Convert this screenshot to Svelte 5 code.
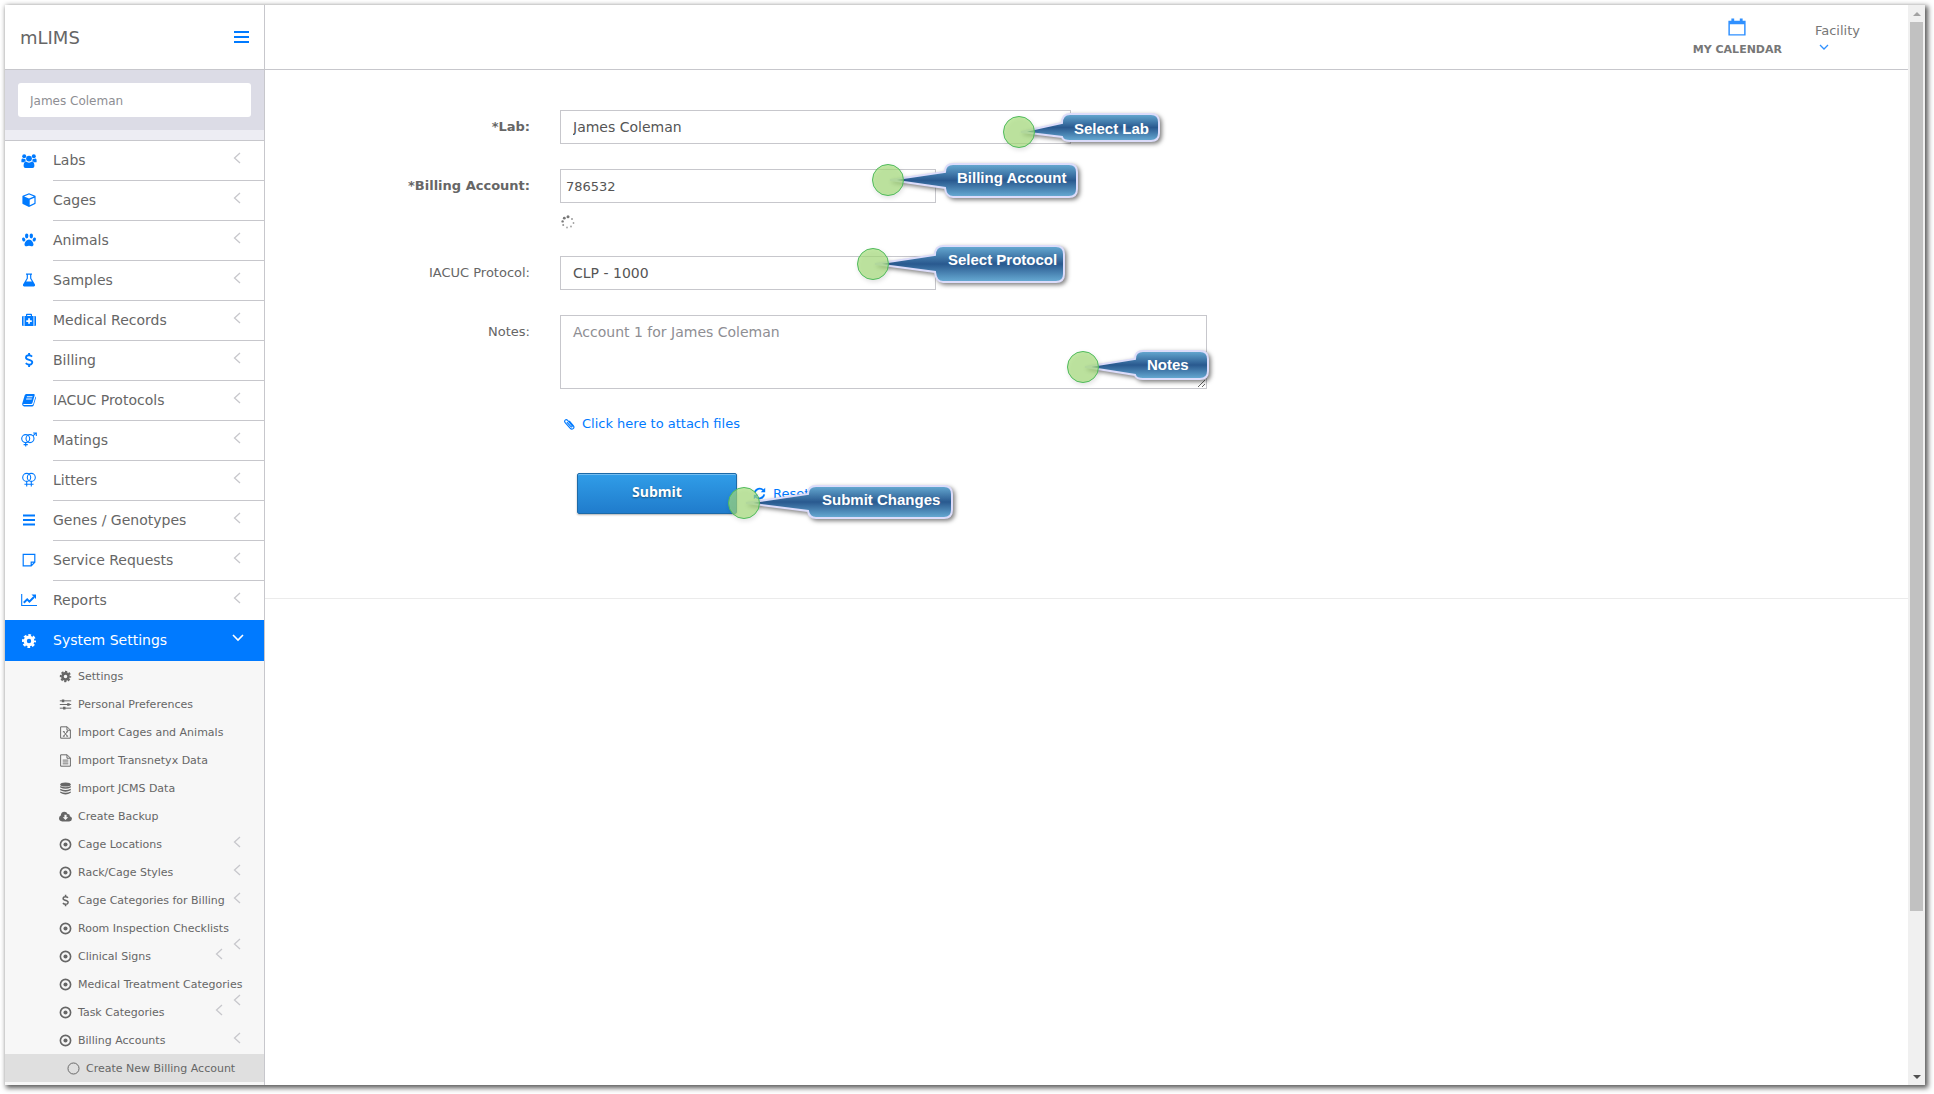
<script lang="ts">
    type SubItem = { label: string; icon: string; arrow?: "plain" | "dropped" | "inset" };

    const navItems = [
        { label: "Labs", icon: "users" },
        { label: "Cages", icon: "cube" },
        { label: "Animals", icon: "paw" },
        { label: "Samples", icon: "flask" },
        { label: "Medical Records", icon: "medkit" },
        { label: "Billing", icon: "dollar" },
        { label: "IACUC Protocols", icon: "book" },
        { label: "Matings", icon: "mating" },
        { label: "Litters", icon: "litter" },
        { label: "Genes / Genotypes", icon: "bars" },
        { label: "Service Requests", icon: "note" },
        { label: "Reports", icon: "chart" },
    ];

    const subItems: SubItem[] = [
        { label: "Settings", icon: "gear" },
        { label: "Personal Preferences", icon: "sliders" },
        { label: "Import Cages and Animals", icon: "excel" },
        { label: "Import Transnetyx Data", icon: "file" },
        { label: "Import JCMS Data", icon: "database" },
        { label: "Create Backup", icon: "cloud" },
        { label: "Cage Locations", icon: "target", arrow: "plain" },
        { label: "Rack/Cage Styles", icon: "target", arrow: "plain" },
        { label: "Cage Categories for Billing", icon: "dollar", arrow: "plain" },
        { label: "Room Inspection Checklists", icon: "target", arrow: "dropped" },
        { label: "Clinical Signs", icon: "target", arrow: "inset" },
        { label: "Medical Treatment Categories", icon: "target", arrow: "dropped" },
        { label: "Task Categories", icon: "target", arrow: "inset" },
        { label: "Billing Accounts", icon: "target", arrow: "plain" },
    ];

    // Annotation balloons: tip of the pointer, then the box, in main area pixels.
    const callouts = [
        { text: "Select Lab", cx: 754, cy: 62, x: 797, y: 44, w: 97, h: 27, tx: 809, ty: 64 },
        { text: "Billing Account", cx: 623, cy: 110, x: 680, y: 94, w: 132, h: 33, tx: 692, ty: 113 },
        { text: "Select Protocol", cx: 608, cy: 194, x: 670, y: 176, w: 129, h: 36, tx: 683, ty: 195 },
        { text: "Notes", cx: 818, cy: 297, x: 870, y: 281, w: 73, h: 28, tx: 882, ty: 300 },
        { text: "Submit Changes", cx: 479, cy: 433, x: 543, y: 416, w: 144, h: 32, tx: 557, ty: 435 },
    ];

    // The pointer joins the box between the two left corners, which stay round.
    function balloon(c) {
        const r = 8;
        const right = c.x + c.w;
        const bottom = c.y + c.h;
        const upper = Math.max(c.cy - 9, c.y + r);
        const lower = Math.min(c.cy + 8, bottom - r + 4);
        return (
            `M${c.x + r} ${c.y}H${right - r}Q${right} ${c.y} ${right} ${c.y + r}` +
            `V${bottom - r}Q${right} ${bottom} ${right - r} ${bottom}` +
            `H${c.x + r}Q${c.x + 1} ${bottom} ${c.x} ${lower}` +
            `L${c.cx + 2} ${c.cy}L${c.x} ${upper}` +
            `Q${c.x} ${c.y} ${c.x + r} ${c.y}Z`
        );
    }

    let lab = "James Coleman";
    let account = "786532";
    let protocol = "CLP - 1000";
    let notes = "Account 1 for James Coleman";
    let search = "James Coleman";
</script>

{#snippet icon(name: string)}
    <svg class="icon" viewBox="0 0 16 16" aria-hidden="true">
        {#if name === "users"}
            <g fill="currentColor">
                <circle cx="3.2" cy="3.2" r="2" />
                <circle cx="12.8" cy="3.2" r="2" />
                <path d="M.4 9V7.2Q.4 5.4 1.6 5.6Q3 6.4 4.4 5.9Q4.3 7.5 5 8.2Q3.6 8.4 3 9.3H1.2Q.5 9.4.4 9ZM15.600 9V7.200Q15.600 5.400 14.400 5.600Q13 6.400 11.600 5.900Q11.700 7.500 11 8.200Q12.400 8.400 13 9.300H14.800Q15.500 9.400 15.600 9Z" />
                <circle cx="8" cy="5.600" r="2.900" />
                <path d="M4.900 8.600Q8 10.800 11.100 8.600Q13.400 9.100 13.400 13Q13.400 15 11.500 15H4.500Q2.600 15 2.600 13Q2.600 9.100 4.900 8.600Z" />
            </g>
        {:else if name === "cube"}
            <path fill="currentColor" fill-rule="evenodd" d="M8 1.300L14.300 3.800Q14.600 4 14.600 4.400V11.300Q14.600 11.700 14.200 12L8 14.900L1.800 12Q1.400 11.700 1.400 11.300V4.400Q1.400 4 1.700 3.800ZM8 2.600L3.100 4.500L8 6.500L12.900 4.500ZM13.400 5.700L8.700 7.700V13.200L13.400 11Z" />
        {:else if name === "paw"}
            <g fill="currentColor">
                <ellipse cx="5.700" cy="4" rx="1.700" ry="2.400" />
                <ellipse cx="10.300" cy="4" rx="1.700" ry="2.400" />
                <ellipse cx="2.700" cy="7.500" rx="1.600" ry="2.100" transform="rotate(-20 2.700 7.500)" />
                <ellipse cx="13.300" cy="7.500" rx="1.600" ry="2.100" transform="rotate(20 13.300 7.500)" />
                <path d="M8 7.500C10.300 7.500 12.500 10.500 12.500 12.500C12.500 14 11.400 14.400 10.300 14.200Q8 13.300 5.700 14.200C4.600 14.400 3.500 14 3.500 12.500C3.500 10.500 5.700 7.500 8 7.500Z" />
            </g>
        {:else if name === "flask"}
            <path fill="currentColor" fill-rule="evenodd" d="M5 1.500H11V2.700H10.300V6.200L14 12.600Q14.500 14.300 13 14.500H3Q1.500 14.300 2 12.600L5.700 6.200V2.700H5ZM6.900 2.700V6.500L5.100 9.500H10.900L9.100 6.500V2.700Z" />
        {:else if name === "medkit"}
            <path fill="currentColor" fill-rule="evenodd" d="M1 5Q1 4 2 4H2.600V14H2Q1 14 1 13ZM13.400 4H14Q15 4 15 5V13Q15 14 14 14H13.400ZM3.500 4H5V2.500Q5 1.700 5.800 1.700H10.200Q11 1.700 11 2.500V4H12.500V14H3.500ZM6.200 2.900V4H9.800V2.900ZM7.200 6.300V8.200H5.300V9.900H7.200V11.800H8.900V9.900H10.800V8.200H8.900V6.300Z" />
        {:else if name === "dollar"}
            <path fill="none" stroke="currentColor" stroke-width="1.900" d="M8.100 1V3.300M8.100 12.700V15M11.100 4.600Q9.700 3.200 7.900 3.300C4.300 3.400 4.300 6.700 6.700 7.400L9.500 8.300C12.300 9.300 11.600 12.700 8.200 12.700Q6.200 12.700 4.800 11.200" />
        {:else if name === "book"}
            <path fill="currentColor" fill-rule="evenodd" d="M5.200 2H13Q14 2.200 13.700 3.300L11.400 11Q11.100 12 10 12H3Q2 12.200 2.300 13H11Q12 13 12.300 12L14.500 4.600Q15.200 5 14.900 6L12.700 13.200Q12.300 14.400 11 14.400H3Q1 14 1.100 12L3.700 3.300Q4 2.200 5.200 2ZM6 4.300L5.700 5.200H11.300L11.600 4.300ZM5.300 6.500L5 7.400H10.600L10.900 6.500Z" />
        {:else if name === "mating"}
            <g fill="none" stroke="currentColor" stroke-width="1.100">
                <circle cx="4.700" cy="6.600" r="4" />
                <circle cx="9" cy="6.600" r="4" />
                <path d="M4.700 10.600V14.500M2.600 12.600H6.800M11.900 3.800L14.900 1.100M12.200 1H15.300V4" />
            </g>
        {:else if name === "litter"}
            <g fill="none" stroke="currentColor" stroke-width="1.100">
                <circle cx="5.700" cy="5.400" r="4" />
                <circle cx="10.300" cy="5.400" r="4" />
                <path d="M5.700 9.400V14.500M10.300 9.400V14.500M3.400 12.200H12.600" />
            </g>
        {:else if name === "bars"}
            <path fill="currentColor" d="M2 2.500H14V4.500H2ZM2 7H14V9H2ZM2 11.500H14V13.500H2Z" />
        {:else if name === "note"}
            <path fill="none" stroke="currentColor" stroke-width="1.200" d="M2.200 2.300H13.800V10.200L10.200 13.800H2.200ZM13.800 10.200H10.200V13.800" />
        {:else if name === "chart"}
            <path fill="none" stroke="currentColor" stroke-width="1.100" d="M.7 2V13.500H16" />
            <path fill="none" stroke="currentColor" stroke-width="2" d="M2.800 10.800L6.200 7.400L8.400 9.600L13 5" />
            <path fill="currentColor" d="M10.500 2.500H15V7Z" />
        {:else if name === "gear"}
            <circle cx="8" cy="8" r="3.800" fill="none" stroke="currentColor" stroke-width="3.200" />
            <circle cx="8" cy="8" r="5.900" fill="none" stroke="currentColor" stroke-width="2.200" stroke-dasharray="2.700 1.934" stroke-dashoffset="1.350" />
        {:else if name === "sliders"}
            <path fill="none" stroke="currentColor" stroke-width="1.200" d="M1 3.500H15M1 8H15M1 12.500H15" />
            <path fill="currentColor" d="M3.500 1.900H6.500V5.100H3.500ZM10 6.400H13V9.600H10ZM5 10.900H8V14.100H5Z" />
        {:else if name === "excel" || name === "file"}
            <path fill="none" stroke="currentColor" stroke-width="1.200" d="M2 1H10L14 5V15H2ZM9.800 1V5.200H14" />
            {#if name === "excel"}
                <path fill="none" stroke="currentColor" stroke-width="1.200" d="M5.700 7L10.300 12.500M10.300 7L5.700 12.500M4.800 7H7M9 7H11.200M4.800 12.500H7M9 12.500H11.200" />
            {:else}
                <path fill="none" stroke="currentColor" stroke-width="1.100" d="M4.500 7.500H11.500M4.500 9.800H11.500M4.500 12.100H11.500" />
            {/if}
        {:else if name === "database"}
            <g fill="currentColor">
                <ellipse cx="8" cy="3" rx="6.500" ry="2.500" />
                <path d="M1.500 4.800Q8 8 14.500 4.800V6.700Q8 10.200 1.500 6.700ZM1.500 8.200Q8 11.500 14.500 8.200V10.200Q8 13.500 1.500 10.200ZM1.500 11.700Q8 15 14.500 11.700V13.300Q8 17.500 1.500 13.300Z" />
            </g>
        {:else if name === "cloud"}
            <path fill="currentColor" fill-rule="evenodd" d="M4 14Q0 13.800 0 10.200Q.1 7.800 2.200 6.800Q2.400 2.300 6.600 2.200Q9.500 2.300 10.600 4.900Q13.500 4.600 13.400 7.600Q16 8.300 16 10.700Q15.800 13.800 12.500 14ZM6.700 5.800V8.800H4.600L8 12.300L11.400 8.800H9.300V5.800Z" />
        {:else if name === "target"}
            <circle cx="8" cy="8" r="6.300" fill="none" stroke="currentColor" stroke-width="2" />
            <circle cx="8" cy="8" r="2.500" fill="currentColor" />
        {:else if name === "circle"}
            <circle cx="8" cy="8" r="6.800" fill="none" stroke="currentColor" stroke-width="1.200" />
        {:else if name === "calendar"}
            <path fill="none" stroke="currentColor" stroke-width="1.300" d="M1 3H15V15H1Z" />
            <path fill="currentColor" d="M1 3H15V5.500H1ZM3 .5H5.500V4H3ZM10.500 .5H13V4H10.500Z" />
        {:else if name === "clip"}
            <path fill="none" stroke="currentColor" stroke-width="1.500" d="M5.200 5.600L10.200 11.300C11.400 12.600 12.900 11.300 11.900 10L6.200 3.300C4 .9.800 3.300 2.900 6.200L9.400 13.600C12.300 16.600 16.200 13.400 13.700 10.100L8.300 3.700" />
        {:else if name === "refresh"}
            <path fill="none" stroke="currentColor" stroke-width="2.300" d="M2.200 7A6 6 0 0 1 12.600 4M13.800 9A6 6 0 0 1 3.400 12" />
            <path fill="currentColor" d="M15 1V6.500H9.500ZM1 15V9.500H6.500Z" />
        {/if}
    </svg>
{/snippet}

{#snippet arrow(kind: string)}
    <svg class="arrow {kind}" viewBox="0 0 8 12" aria-hidden="true">
        <path d="M7 1L1.500 6L7 11" />
    </svg>
{/snippet}

<div class="window">
    <aside>
        <div class="brand">
            <span>mLIMS</span>
            <button class="toggle" aria-label="Toggle menu">
                <svg viewBox="0 0 15 12"><path d="M0 0H15V2H0ZM0 5H15V7H0ZM0 10H15V12H0Z" /></svg>
            </button>
        </div>
        <div class="search">
            <input type="text" aria-label="Search" bind:value={search} />
        </div>
        <nav>
            {#each navItems as item}
                <a class="item" href="#top">
                    {@render icon(item.icon)}
                    <span class="text">{item.label}{@render arrow("plain")}</span>
                </a>
            {/each}
            <a class="item active" href="#top">
                {@render icon("gear")}
                <span class="text">
                    System Settings
                    <svg class="down" viewBox="0 0 12 8" aria-hidden="true"><path d="M1 1L6 6L11 1" /></svg>
                </span>
            </a>
            <div class="sub">
                {#each subItems as item}
                    <a class="subitem" href="#top">
                        {@render icon(item.icon)}
                        <span>{item.label}</span>
                        {#if item.arrow}{@render arrow(item.arrow)}{/if}
                    </a>
                {/each}
                <a class="subitem current" href="#top">
                    {@render icon("circle")}
                    <span>Create New Billing Account</span>
                </a>
            </div>
        </nav>
    </aside>

    <div class="page">
        <header>
            <a class="calendar" href="#top">
                {@render icon("calendar")}
                <strong>MY CALENDAR</strong>
            </a>
            <button class="facility">
                Facility
                <svg viewBox="0 0 10 6" aria-hidden="true"><path d="M1 1L5 5L9 1" /></svg>
            </button>
        </header>

        <main>
            <form>
                <div class="row">
                    <label class="required" for="lab">*Lab:</label>
                    <select id="lab" class="wide" bind:value={lab}>
                        <option>James Coleman</option>
                    </select>
                </div>
                <div class="row">
                    <label class="required" for="account">*Billing Account:</label>
                    <div class="field">
                        <input id="account" type="text" bind:value={account} />
                        <svg class="spinner" viewBox="0 0 14 14" aria-hidden="true">
                            <circle cx="7" cy="1.800" r="1.500" />
                            <circle cx="3.300" cy="3.200" r="1.400" />
                            <circle cx="1.600" cy="6.400" r="1.200" />
                            <circle cx="2.200" cy="10" r="1" opacity="0.800" />
                            <circle cx="6" cy="12.500" r="1" opacity="0.600" />
                            <circle cx="10" cy="11.500" r="0.900" opacity="0.700" />
                            <circle cx="12.500" cy="8" r="0.900" opacity="0.700" />
                            <circle cx="11" cy="4" r="0.900" opacity="0.800" />
                        </svg>
                    </div>
                </div>
                <div class="row">
                    <label for="protocol">IACUC Protocol:</label>
                    <select id="protocol" bind:value={protocol}>
                        <option>CLP - 1000</option>
                    </select>
                </div>
                <div class="row">
                    <label for="notes">Notes:</label>
                    <textarea id="notes" bind:value={notes}></textarea>
                </div>
                <a class="attach" href="#top">{@render icon("clip")}Click here to attach files</a>
                <div class="actions">
                    <button type="submit" class="submit">Submit</button>
                    <button type="reset" class="reset">{@render icon("refresh")}Reset</button>
                </div>
            </form>

            <svg class="callouts">
                <defs>
                    <linearGradient id="blue" x1="0" y1="0" x2="0" y2="1">
                        <stop offset="0" stop-color="#67abd3" />
                        <stop offset="0.500" stop-color="#29598f" />
                        <stop offset="1" stop-color="#69add5" />
                    </linearGradient>
                </defs>
                {#each callouts as c}
                    <path class="balloon" d={balloon(c)} />
                    <circle cx={c.cx} cy={c.cy} r="15.500" />
                    <text x={c.tx} y={c.ty}>{c.text}</text>
                {/each}
            </svg>
        </main>
    </div>

    <div class="scrollbar">
        <i class="up"></i>
        <div class="track"><div class="thumb"></div></div>
        <i class="end"></i>
    </div>
</div>

<style>
    :global(body) {
        background: #fff;
    }
    .window,
    .window * {
        box-sizing: border-box;
    }
    .window {
        display: flex;
        height: calc(100vh - 14px);
        margin: 5px 9px 9px 5px;
        overflow: hidden;
        background: #fff;
        box-shadow: 2px 2px 5px 1px rgba(0, 0, 0, 0.65);
        font-family: Verdana, "DejaVu Sans", sans-serif;
        color: #666;
    }
    :global(#app) {
        overflow: hidden;
    }
    a {
        color: inherit;
        text-decoration: none;
    }
    button {
        border: 0;
        background: none;
        padding: 0;
        font: inherit;
        color: inherit;
    }
    .icon {
        width: 16px;
        height: 16px;
        flex: none;
    }
    aside {
        width: 260px;
        flex: none;
        border-right: 1px solid #c7c7cc;
    }
    .brand {
        display: flex;
        align-items: center;
        justify-content: space-between;
        height: 65px;
        padding: 0 15px;
        border-bottom: 1px solid #c7c7cc;
        font-size: 18px;
    }
    .toggle svg {
        display: block;
        width: 15px;
        height: 12px;
        fill: #007aff;
    }
    .search {
        padding: 13px;
        background: #dcdce6;
        border-bottom: 10px solid #ededf3;
    }
    .search input {
        display: block;
        width: 100%;
        height: 34px;
        padding: 2px 12px 0;
        border: 0;
        border-radius: 3px;
        font: 12px Verdana, "DejaVu Sans", sans-serif;
        color: #8e8e93;
    }
    .item {
        display: flex;
        align-items: center;
        height: 40px;
        padding-left: 16px;
        font-size: 14px;
    }
    .item > .icon {
        color: #007aff;
    }
    .text {
        display: flex;
        flex: 1;
        align-items: center;
        justify-content: space-between;
        height: 40px;
        margin-left: 16px;
        padding: 0 23px 2px 0;
        border-top: 1px solid #c7c7cc;
    }
    .item:first-child {
        border-top: 1px solid #c7c7cc;
    }
    .item:first-child .text {
        border-top-color: transparent;
    }
    .item.active {
        height: 41px;
        background: #007aff;
        color: #fff;
    }
    .item.active .icon {
        color: #fff;
    }
    .item.active .text {
        padding-right: 20px;
        border-top-color: transparent;
    }
    .arrow,
    .down {
        flex: none;
        width: 8px;
        height: 12px;
        margin-bottom: 4px;
        fill: none;
        stroke: #c7c7cc;
        stroke-width: 1.3;
    }
    .down {
        width: 12px;
        height: 8px;
        stroke: #fff;
        stroke-width: 1.6;
    }
    .sub {
        height: 500px;
        padding-top: 1px;
        background: #f7f7f7;
    }
    .subitem {
        position: relative;
        display: flex;
        align-items: center;
        height: 28px;
        padding: 0 23px 0 54px;
        font-size: 11px;
        white-space: nowrap;
    }
    .subitem .icon {
        width: 13px;
        height: 13px;
        margin-right: 6px;
    }
    .subitem .arrow {
        margin-left: auto;
    }
    .subitem .inset {
        margin-right: 18px;
    }
    .subitem .dropped {
        position: absolute;
        right: 23px;
        top: 24px;
    }
    .subitem.current {
        padding-left: 62px;
        background: #dfdfdf;
    }
    .page {
        flex: 1;
        min-width: 0;
    }
    header {
        display: flex;
        justify-content: flex-end;
        height: 65px;
        padding-right: 48px;
        border-bottom: 1px solid #c7c7cc;
        color: #777;
    }
    .calendar {
        display: flex;
        flex-direction: column;
        align-items: center;
        gap: 7px;
        margin-right: 33px;
        padding-top: 13px;
        font-size: 11px;
    }
    .calendar .icon {
        width: 18px;
        height: 18px;
        color: #2f90ff;
    }
    .facility {
        align-self: flex-start;
        padding-top: 18px;
        font-size: 13px;
        text-align: left;
    }
    .facility svg {
        display: block;
        width: 10px;
        height: 6px;
        margin: 6px 0 0 4px;
        fill: none;
        stroke: #2f90ff;
        stroke-width: 1.3;
    }
    main {
        position: relative;
        padding-top: 40px;
    }
    form {
        height: 489px;
        border-bottom: 1px solid #ebebeb;
    }
    .row {
        display: flex;
        gap: 30px;
        margin-bottom: 25px;
    }
    label {
        width: 265px;
        padding-top: 9px;
        font-size: 13px;
        line-height: 16px;
        text-align: right;
    }
    .required {
        font-weight: bold;
    }
    select,
    .field input,
    textarea {
        display: block;
        width: 376px;
        height: 34px;
        border: 1px solid #c7c7cc;
        border-radius: 0;
        background: #fff;
        font: 14px Verdana, "DejaVu Sans", sans-serif;
        color: #555;
    }
    select {
        appearance: none;
        padding: 0 12px;
    }
    select.wide {
        width: 511px;
    }
    .field input {
        padding: 0 5px;
        font-size: 13px;
    }
    .spinner {
        display: block;
        width: 14px;
        height: 14px;
        margin: 12px 0 2px 1px;
        fill: #777;
    }
    textarea {
        width: 647px;
        height: 74px;
        padding: 8px 12px;
        color: #8e8e93;
    }
    .attach {
        display: flex;
        align-items: center;
        width: max-content;
        margin: 27px 0 0 298px;
        font-size: 13px;
        line-height: 16px;
        color: #007aff;
    }
    .attach .icon {
        width: 12px;
        height: 12px;
        margin-right: 7px;
    }
    .actions {
        display: flex;
        align-items: center;
        gap: 16px;
        margin: 41px 0 0 312px;
    }
    .submit {
        width: 160px;
        height: 41px;
        padding-bottom: 4px;
        border: 1px solid #1c6aa8;
        border-radius: 2px;
        background: linear-gradient(#309de8, #207ccc);
        box-shadow:
            inset 0 1px 0 #74bdf0,
            0 1px 2px rgba(0, 0, 0, 0.3);
        font: bold 14px "Open Sans", sans-serif;
        color: #fff;
        text-shadow: 0 1px 2px rgba(0, 0, 0, 0.4);
    }
    .reset {
        display: flex;
        align-items: center;
        gap: 7px;
        font-size: 13px;
        color: #007aff;
    }
    .reset .icon {
        width: 13px;
        height: 13px;
    }
    .callouts {
        position: absolute;
        left: 0;
        top: 0;
        width: 100%;
        height: 100%;
        overflow: visible;
        pointer-events: none;
    }
    .balloon {
        fill: url(#blue);
        stroke: #dcdcfa;
        stroke-width: 2;
        filter: drop-shadow(2px 2px 2px rgba(0, 0, 0, 0.5));
    }
    .callouts circle {
        fill: rgba(166, 222, 122, 0.68);
        stroke: #4fba5c;
        filter: drop-shadow(1px 2px 2px rgba(0, 0, 0, 0.15));
    }
    .callouts text {
        font: bold 15px "Liberation Sans", Arial, sans-serif;
        fill: #fff;
    }
    .scrollbar {
        display: flex;
        flex-direction: column;
        align-items: center;
        width: 17px;
        flex: none;
        background: #f0f0f0;
    }
    .track {
        flex: 1;
        width: 13px;
    }
    .thumb {
        height: 85%;
        background: #c1c1c1;
    }
    .up,
    .end {
        margin: 7px 0 6px;
        border: 4px solid transparent;
        border-top: 0;
        border-bottom-color: #a3a3a3;
    }
    .end {
        border-top: 4px solid #505050;
        border-bottom: 0;
    }
</style>
